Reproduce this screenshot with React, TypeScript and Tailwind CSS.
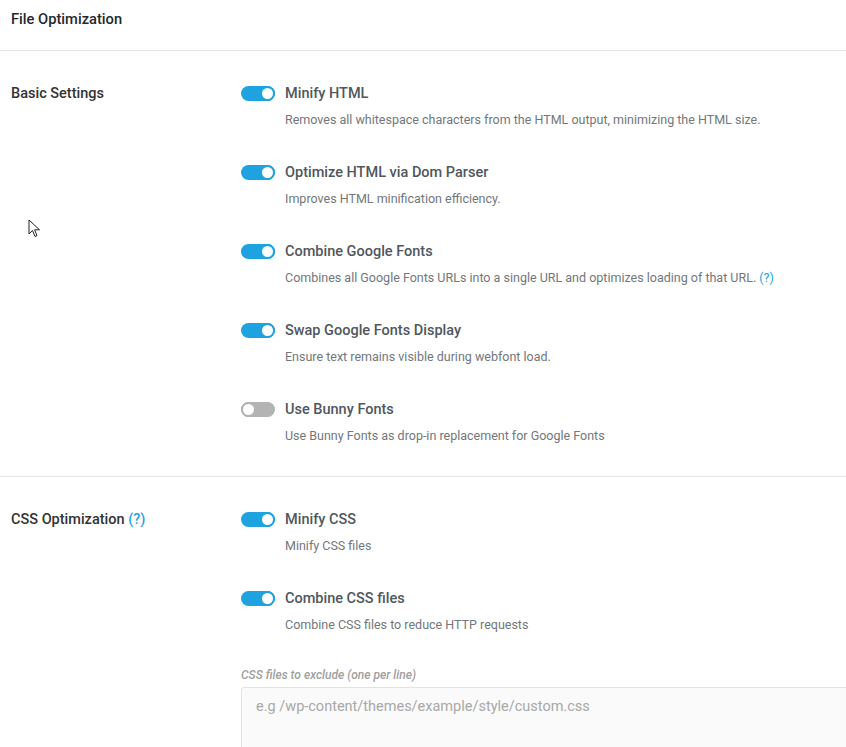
const basicItems = [
  {
    title: 'Minify HTML',
    desc: 'Removes all whitespace characters from the HTML output, minimizing the HTML size.',
    on: true,
  },
  { title: 'Optimize HTML via Dom Parser', desc: 'Improves HTML minification efficiency.', on: true },
  {
    title: 'Combine Google Fonts',
    desc: 'Combines all Google Fonts URLs into a single URL and optimizes loading of that URL.',
    on: true,
    help: true,
  },
  { title: 'Swap Google Fonts Display', desc: 'Ensure text remains visible during webfont load.', on: true },
  { title: 'Use Bunny Fonts', desc: 'Use Bunny Fonts as drop-in replacement for Google Fonts', on: false },
];

const cssItems = [
  { title: 'Minify CSS', desc: 'Minify CSS files', on: true },
  { title: 'Combine CSS files', desc: 'Combine CSS files to reduce HTTP requests', on: true },
];

type Item = { title: string; desc: string; on: boolean; help?: boolean };

function Toggle({ on }: { on: boolean }) {
  return (
    <span
      className={`mt-[2px] flex h-[15px] w-[34px] shrink-0 items-center rounded-full ${
        on ? 'justify-end bg-[#1fa3e0]' : 'justify-start bg-[#b3b3b3]'
      }`}
    >
      <span
        className={`h-[15px] w-[15px] rounded-full border-2 bg-white ${
          on ? 'border-[#1fa3e0]' : 'border-[#b3b3b3]'
        }`}
      />
    </span>
  );
}

function Setting({ item }: { item: Item }) {
  return (
    <div className="flex gap-[10px]">
      <Toggle on={item.on} />
      <div>
        <div className="text-[14.5px] font-medium leading-5 text-[#50575e]">{item.title}</div>
        <p className="mt-[6px] text-[12.5px] leading-5 text-[#72777c]">
          {item.desc}
          {item.help && <span className="text-[#1fa3e0]"> (?)</span>}
        </p>
      </div>
    </div>
  );
}

export default function App() {
  return (
    <div
      className="relative h-[747px] w-[846px] overflow-hidden bg-white"
      style={{ fontFamily: 'Roboto, "Liberation Sans", sans-serif' }}
    >
      {/* Header */}
      <div className="h-[51px] border-b border-[#e5e5e5] pl-[11px] pt-[9px]">
        <h2 className="text-[14.7px] font-medium leading-5 text-[#23282d]">File Optimization</h2>
      </div>

      {/* Basic settings */}
      <div className="flex border-b border-[#e5e5e5] pt-[33px] pb-[30px]">
        <div className="w-[241px] shrink-0 pl-[11px] text-[14.5px] font-medium leading-5 text-[#333]">
          Basic Settings
        </div>
        <div className="flex flex-col gap-[33px]">
          {basicItems.map((item) => (
            <Setting key={item.title} item={item} />
          ))}
        </div>
      </div>

      {/* CSS optimization */}
      <div className="flex pt-[33px]">
        <div className="w-[241px] shrink-0 pl-[11px] text-[14.5px] font-medium leading-5 text-[#333]">
          CSS Optimization <span className="text-[#1fa3e0]">(?)</span>
        </div>
        <div className="flex flex-col">
          <div className="flex flex-col gap-[33px]">
            {cssItems.map((item) => (
              <Setting key={item.title} item={item} />
            ))}
          </div>
          <label className="mt-[32px] block text-[12px] font-medium italic leading-4 text-[#a0a0a0]">
            CSS files to exclude (one per line)
          </label>
          <textarea
            className="mt-[4px] h-[90px] w-[640px] resize-none rounded-[3px] border border-[#e2e2e2] bg-[#fafafa] px-[14px] py-[9px] text-[14.5px] leading-5 text-[#555] placeholder:text-[#a8a8a8] outline-none"
            placeholder="e.g /wp-content/themes/example/style/custom.css"
          />
        </div>
      </div>

      {/* Mouse pointer */}
      <svg className="absolute left-[28px] top-[219px]" width="13" height="19" viewBox="0 0 13 19">
        <path
          d="M1 1 L1 15 L4.5 11.5 L7 17.5 L9 16.6 L6.6 10.8 L11.5 10.8 Z"
          fill="white"
          stroke="#222"
          strokeWidth="1"
          strokeLinejoin="round"
        />
      </svg>
    </div>
  );
}
